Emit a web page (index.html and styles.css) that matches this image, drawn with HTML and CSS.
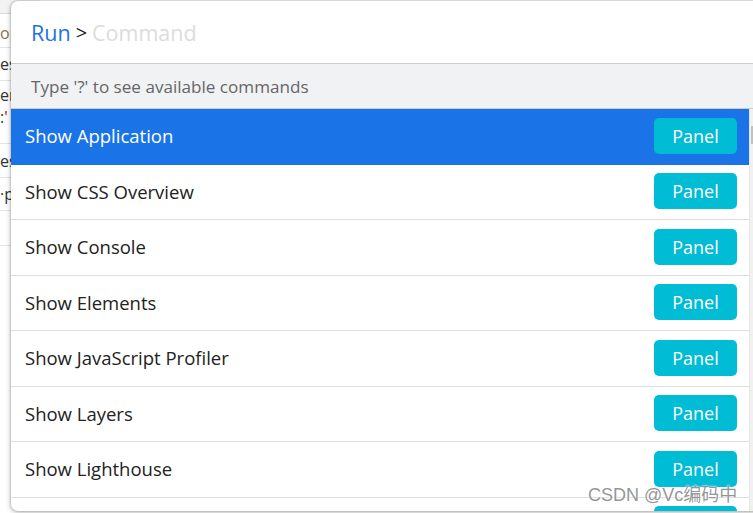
FILE: index.html
```html
<!DOCTYPE html>
<html>
<head>
<meta charset="utf-8">
<link rel="stylesheet" href="styles.css">
</head>
<body>
<div class="backdrop">
  <div class="bg-head"></div>
  <div class="bg-row h34 tan">op</div>
  <div class="bg-row h33">es</div>
  <div class="bg-row h62 multi">er<br>:<span class="red">'</span></div>
  <div class="bg-row h34">es</div>
  <div class="bg-row h33">·p</div>
  <div class="bg-row h35"></div>
</div>

<div class="dialog">
  <div class="prompt">
    <span class="prefix">Run</span>
    <span class="sep">&gt;</span>
    <span class="placeholder">Command</span>
  </div>
  <div class="hint">Type '?' to see available commands</div>
  <div class="list-wrap">
    <ul class="list">
      <li class="item selected"><span class="title">Show Application</span><span class="badge">Panel</span></li>
      <li class="item"><span class="title">Show CSS Overview</span><span class="badge">Panel</span></li>
      <li class="item"><span class="title">Show Console</span><span class="badge">Panel</span></li>
      <li class="item"><span class="title">Show Elements</span><span class="badge">Panel</span></li>
      <li class="item"><span class="title">Show JavaScript Profiler</span><span class="badge">Panel</span></li>
      <li class="item"><span class="title">Show Layers</span><span class="badge">Panel</span></li>
      <li class="item"><span class="title">Show Lighthouse</span><span class="badge">Panel</span></li>
      <li class="item"><span class="title"></span><span class="badge"></span></li>
    </ul>
    <div class="scrollbar"><div class="thumb"></div></div>
  </div>
</div>

<div class="watermark">CSDN @Vc编码中</div>
</body>
</html>
```

FILE: styles.css
```css
* { box-sizing: border-box; }
html, body {
  margin: 0;
  padding: 0;
  width: 753px;
  height: 513px;
  overflow: hidden;
  background: #ffffff;
  font-family: "Open Sans", "Noto Sans", "Noto Sans CJK SC", sans-serif;
}

.backdrop {
  display: flex;
  flex-direction: column;
  width: 40px;
  color: #333;
  font-size: 16px;
}
.bg-head {
  height: 14px;
  background: #f3f3f3;
  border-bottom: 1px solid #dcdcdc;
}
.bg-row {
  border-bottom: 1px solid #e4e4e4;
  white-space: nowrap;
  display: flex;
  align-items: center;
}
.bg-row.h34 { height: 34px; }
.bg-row.h33 { height: 33px; }
.bg-row.h35 { height: 35px; }
.bg-row.h62 { height: 63px; }
.bg-row.tan { color: #8b7355; padding-top: 4px; }
.bg-row.multi { display: block; line-height: 22px; padding-top: 3px; }
.bg-row .red { color: #c80000; }

.dialog {
  position: absolute;
  left: 11px;
  top: 1px;
  width: 760px;
  height: 510px;
  background: #fff;
  border-radius: 7px;
  box-shadow: 0 0 3px rgba(0,0,0,0.35), 0 2px 6px rgba(0,0,0,0.2);
  overflow: hidden;
  display: flex;
  flex-direction: column;
}

.prompt {
  height: 63px;
  flex: none;
  display: flex;
  align-items: center;
  padding-left: 20px;
  gap: 5px;
  font-size: 21.5px;
  border-bottom: 1px solid #cccccc;
}
.prefix { color: #1a73e8; }
.sep { color: #222; font-size: 20px; }
.placeholder { color: #dcdcdc; }

.hint {
  height: 45px;
  flex: none;
  display: flex;
  align-items: center;
  padding-left: 20px;
  background: #f1f2f4;
  color: #666;
  font-size: 17.1px;
  border-bottom: 1px solid #cccccc;
}

.list-wrap {
  flex: 1;
  display: flex;
  min-height: 0;
  overflow: hidden;
}
.list {
  list-style: none;
  margin: 0;
  padding: 0;
  width: 738px;
  flex: none;
}
.item {
  height: 55.5px;
  display: flex;
  align-items: center;
  justify-content: space-between;
  padding: 0 12px 1px 14px;
  border-bottom: 1px solid #dddddd;
  color: #222;
  font-size: 18.5px;
}
.item.selected {
  background: #1b73e8;
  color: #fff;
  border-bottom-color: #1b73e8;
}
.badge {
  width: 83px;
  height: 36px;
  border-radius: 5px;
  background: #00bcd4;
  color: #fff;
  display: flex;
  align-items: center;
  justify-content: center;
  font-size: 18px;
}

.scrollbar {
  width: 30px;
  flex: none;
  background: #f1f1f1;
  border-left: 1px solid #e8e8e8;
  padding-top: 17px;
}
.thumb {
  width: 8px;
  height: 18px;
  background: #c1c1c1;
  margin-left: 1px;
}

.watermark {
  position: absolute;
  left: 588px;
  top: 480px;
  font-family: "Liberation Sans", "Noto Sans CJK SC", sans-serif;
  font-size: 18px;
  color: rgba(130,130,130,0.85);
  text-shadow: 0 0 2px #fff, 0 0 2px #fff;
}
```
